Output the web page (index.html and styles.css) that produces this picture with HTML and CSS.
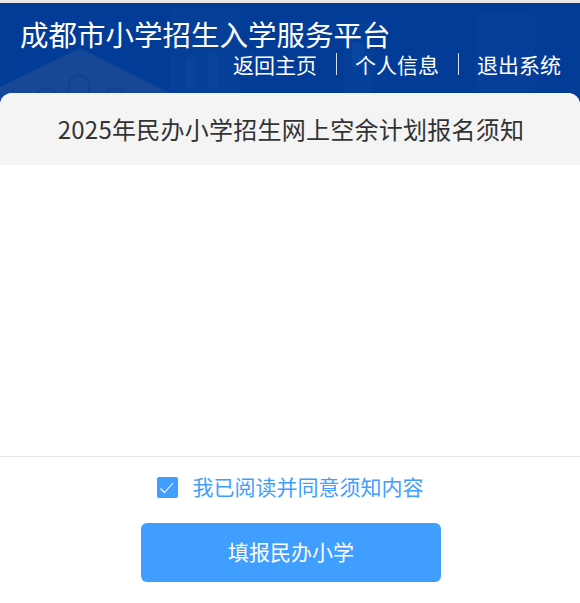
FILE: index.html
```html
<!DOCTYPE html>
<html lang="zh-CN">
<head>
    <meta charset="UTF-8">
    <meta name="viewport" content="width=device-width, initial-scale=1.0">
    <title>成都市小学招生入学服务平台</title>
    <link rel="stylesheet" href="styles.css">
</head>
<body>
    <div class="header">
        <svg class="header-art" viewBox="0 0 580 100" aria-hidden="true">
            <rect x="170" y="6" width="70" height="94" fill="#063f98"/>
            <rect x="186" y="55" width="10" height="30" fill="#0a4499"/>
            <rect x="208" y="50" width="10" height="35" fill="#0a4499"/>
            <rect x="345" y="20" width="28" height="80" fill="#043f99"/>
            <rect x="352" y="40" width="12" height="24" fill="#0846a2"/>
            <rect x="385" y="10" width="1" height="90" fill="#074097"/>
            <rect x="475" y="8" width="60" height="92" fill="#043e98"/>
            <polygon points="0,84 80,45 172,91 172,100 0,100" fill="#174797"/>
            <path d="M37 100 V94 a10 9 0 0 1 20 0 V100 M69 100 V82 a10 10 0 0 1 20 0 V100 M105 100 V94 a10 9 0 0 1 20 0 V100" fill="none" stroke="#104292" stroke-width="2"/>
        </svg>
        <h1 class="site-title">成都市小学招生入学服务平台</h1>
        <div class="nav">
            <a class="nav-link">返回主页</a>
            <span class="nav-sep"></span>
            <a class="nav-link">个人信息</a>
            <span class="nav-sep"></span>
            <a class="nav-link">退出系统</a>
        </div>
    </div>
    <div class="sheet">
        <h2 class="sheet-title">2025年民办小学招生网上空余计划报名须知</h2>
        <div class="sheet-body"></div>
        <div class="sheet-footer">
            <label class="agree">
                <span class="agree-box">
                    <svg viewBox="0 0 21 21" width="21" height="21"><path d="M3.5 11.5 L7.5 15.5 L16 6" fill="none" stroke="#fff" stroke-width="1.1"/></svg>
                </span>
                <span class="agree-text">我已阅读并同意须知内容</span>
            </label>
            <button class="submit-btn">填报民办小学</button>
        </div>
    </div>
</body>
</html>
```

FILE: styles.css
```css
* {
    box-sizing: border-box;
}
body {
    margin: 0;
    height: 603px;
    overflow: hidden;
    background: #fff;
    font-family: "Noto Sans CJK SC", "Liberation Sans", sans-serif;
}
.header {
    position: relative;
    height: 106px;
    padding: 13px 19px 0 20px;
    border-top: 3px solid #e8e8e8;
    background: #033c96;
    color: #fff;
}
.header-art {
    position: absolute;
    left: 0;
    top: 0;
    width: 580px;
    height: 100px;
}
.site-title {
    position: relative;
    margin: 0;
    font-size: 28.5px;
    font-weight: 400;
    line-height: 36px;
}
.nav {
    position: relative;
    display: flex;
    justify-content: flex-end;
    align-items: center;
    gap: 18.5px;
    font-size: 21px;
    line-height: 24px;
}
.nav-sep {
    width: 1px;
    height: 22px;
    background: #d5deee;
}
.sheet {
    position: absolute;
    top: 93px;
    left: 0;
    right: 0;
    bottom: 0;
    display: flex;
    flex-direction: column;
    background: #fff;
    border-radius: 12px 12px 0 0;
}
.sheet-title {
    margin: 0;
    height: 72px;
    padding-left: 2px;
    background: #f4f4f4;
    border-radius: 12px 12px 0 0;
    color: #333;
    font-size: 24px;
    font-weight: 400;
    letter-spacing: 0.25px;
    line-height: 72px;
    text-align: center;
}
.sheet-body {
    height: 291px;
}
.sheet-footer {
    border-top: 1px solid #e4e4ea;
    display: flex;
    flex-direction: column;
    align-items: center;
    padding-top: 20px;
}
.agree {
    display: flex;
    align-items: center;
    gap: 15px;
    height: 21px;
}
.agree-box {
    display: flex;
    align-items: center;
    justify-content: center;
    width: 21px;
    height: 21px;
    background: #409eff;
    border-radius: 2px;
}
.agree-text {
    padding-bottom: 4px;
    color: #409eff;
    font-size: 21px;
    line-height: 20px;
}
.submit-btn {
    width: 300px;
    height: 59px;
    margin-top: 25px;
    margin-left: 2px;
    padding-bottom: 4px;
    border: 0;
    border-radius: 6px;
    background: #409eff;
    color: #fff;
    font-family: inherit;
    font-size: 21px;
}
```
